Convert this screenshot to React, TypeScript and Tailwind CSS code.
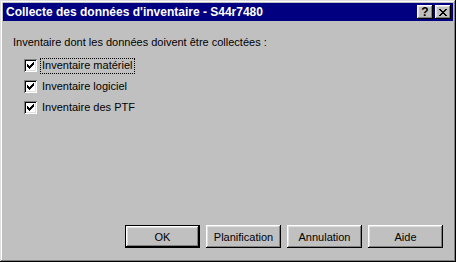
import React from "react";

const raised =
  "shadow-[inset_-1px_-1px_#000,inset_1px_1px_#fff,inset_-2px_-2px_#808080,inset_2px_2px_#dfdfdf]";

function Check() {
  return (
    <svg width="7" height="7" viewBox="0 0 7 7" shapeRendering="crispEdges">
      <path
        d="M6 0h1v3h-1zM5 1h1v3h-1zM4 2h1v3h-1zM0 2h1v3h-1zM1 3h1v3h-1zM2 4h1v3h-1zM3 3h1v3h-1z"
        fill="#000"
      />
    </svg>
  );
}

function CheckBox() {
  return (
    <div className="w-[13px] h-[13px] bg-white flex items-center justify-center shrink-0 shadow-[inset_1px_1px_#808080,inset_-1px_-1px_#fff,inset_2px_2px_#000,inset_-2px_-2px_#dfdfdf]">
      <Check />
    </div>
  );
}

function Row({ label, focused }: { label: string; focused?: boolean }) {
  return (
    <div className="h-[21px] flex items-center">
      <CheckBox />
      <span
        className={
          "ml-[3px] h-[16px] px-[1px] flex items-center border border-dotted " +
          (focused ? "border-black" : "border-transparent")
        }
      >
        {label}
      </span>
    </div>
  );
}

function Btn({ label, isDefault }: { label: string; isDefault?: boolean }) {
  if (isDefault) {
    return (
      <div className="w-[75px] h-[23px] border border-black flex">
        <div className={"flex-1 flex items-center justify-center pt-[1px] bg-[#c0c0c0] " + raised}>
          {label}
        </div>
      </div>
    );
  }
  return (
    <div className={"w-[75px] h-[23px] flex items-center justify-center pt-[1px] bg-[#c0c0c0] " + raised}>
      {label}
    </div>
  );
}

export default function App() {
  return (
    <div
      className="w-[456px] h-[262px] bg-[#c0c0c0] p-[3px] flex flex-col text-black text-[11px] leading-[13px] shadow-[inset_-1px_-1px_#000,inset_1px_1px_#dfdfdf,inset_-2px_-2px_#808080,inset_2px_2px_#fff]"
      style={{ fontFamily: '"Liberation Sans", Arial, sans-serif' }}
    >
      <div className="h-[18px] bg-[#000080] flex items-center pl-[3px] pr-[2px]">
        <span className="text-white font-bold text-[12px] leading-[14px] flex-1 whitespace-nowrap">
          Collecte des données d'inventaire - S44r7480
        </span>
        <div
          className={
            "w-[16px] h-[14px] bg-[#c0c0c0] text-black flex items-center justify-center " +
            raised
          }
        >
          <span className="text-[12px] font-bold leading-none -mt-[1px]">?</span>
        </div>
        <div
          className={
            "ml-[2px] w-[16px] h-[14px] bg-[#c0c0c0] flex items-center justify-center " +
            raised
          }
        >
          <svg width="8" height="7" viewBox="0 0 8 7" shapeRendering="crispEdges">
            <path
              d="M0 0h2v1h-2zM6 0h2v1h-2zM1 1h2v1h-2zM5 1h2v1h-2zM2 2h4v1h-4zM3 3h2v1h-2zM2 4h4v1h-4zM1 5h2v1h-2zM5 5h2v1h-2zM0 6h2v1h-2zM6 6h2v1h-2z"
              fill="#000"
            />
          </svg>
        </div>
      </div>
      <div className="mt-[15px] pl-[10px]">
        Inventaire dont les données doivent être collectées :
      </div>
      <div className="mt-[6px] pl-[21px] flex flex-col">
        <Row label="Inventaire matériel" focused />
        <Row label="Inventaire logiciel" />
        <Row label="Inventaire des PTF" />
      </div>
      <div className="flex-1" />
      <div className="flex justify-end gap-[6px] pr-[10px] pb-[11px]">
        <Btn label="OK" isDefault />
        <Btn label="Planification" />
        <Btn label="Annulation" />
        <Btn label="Aide" />
      </div>
    </div>
  );
}
